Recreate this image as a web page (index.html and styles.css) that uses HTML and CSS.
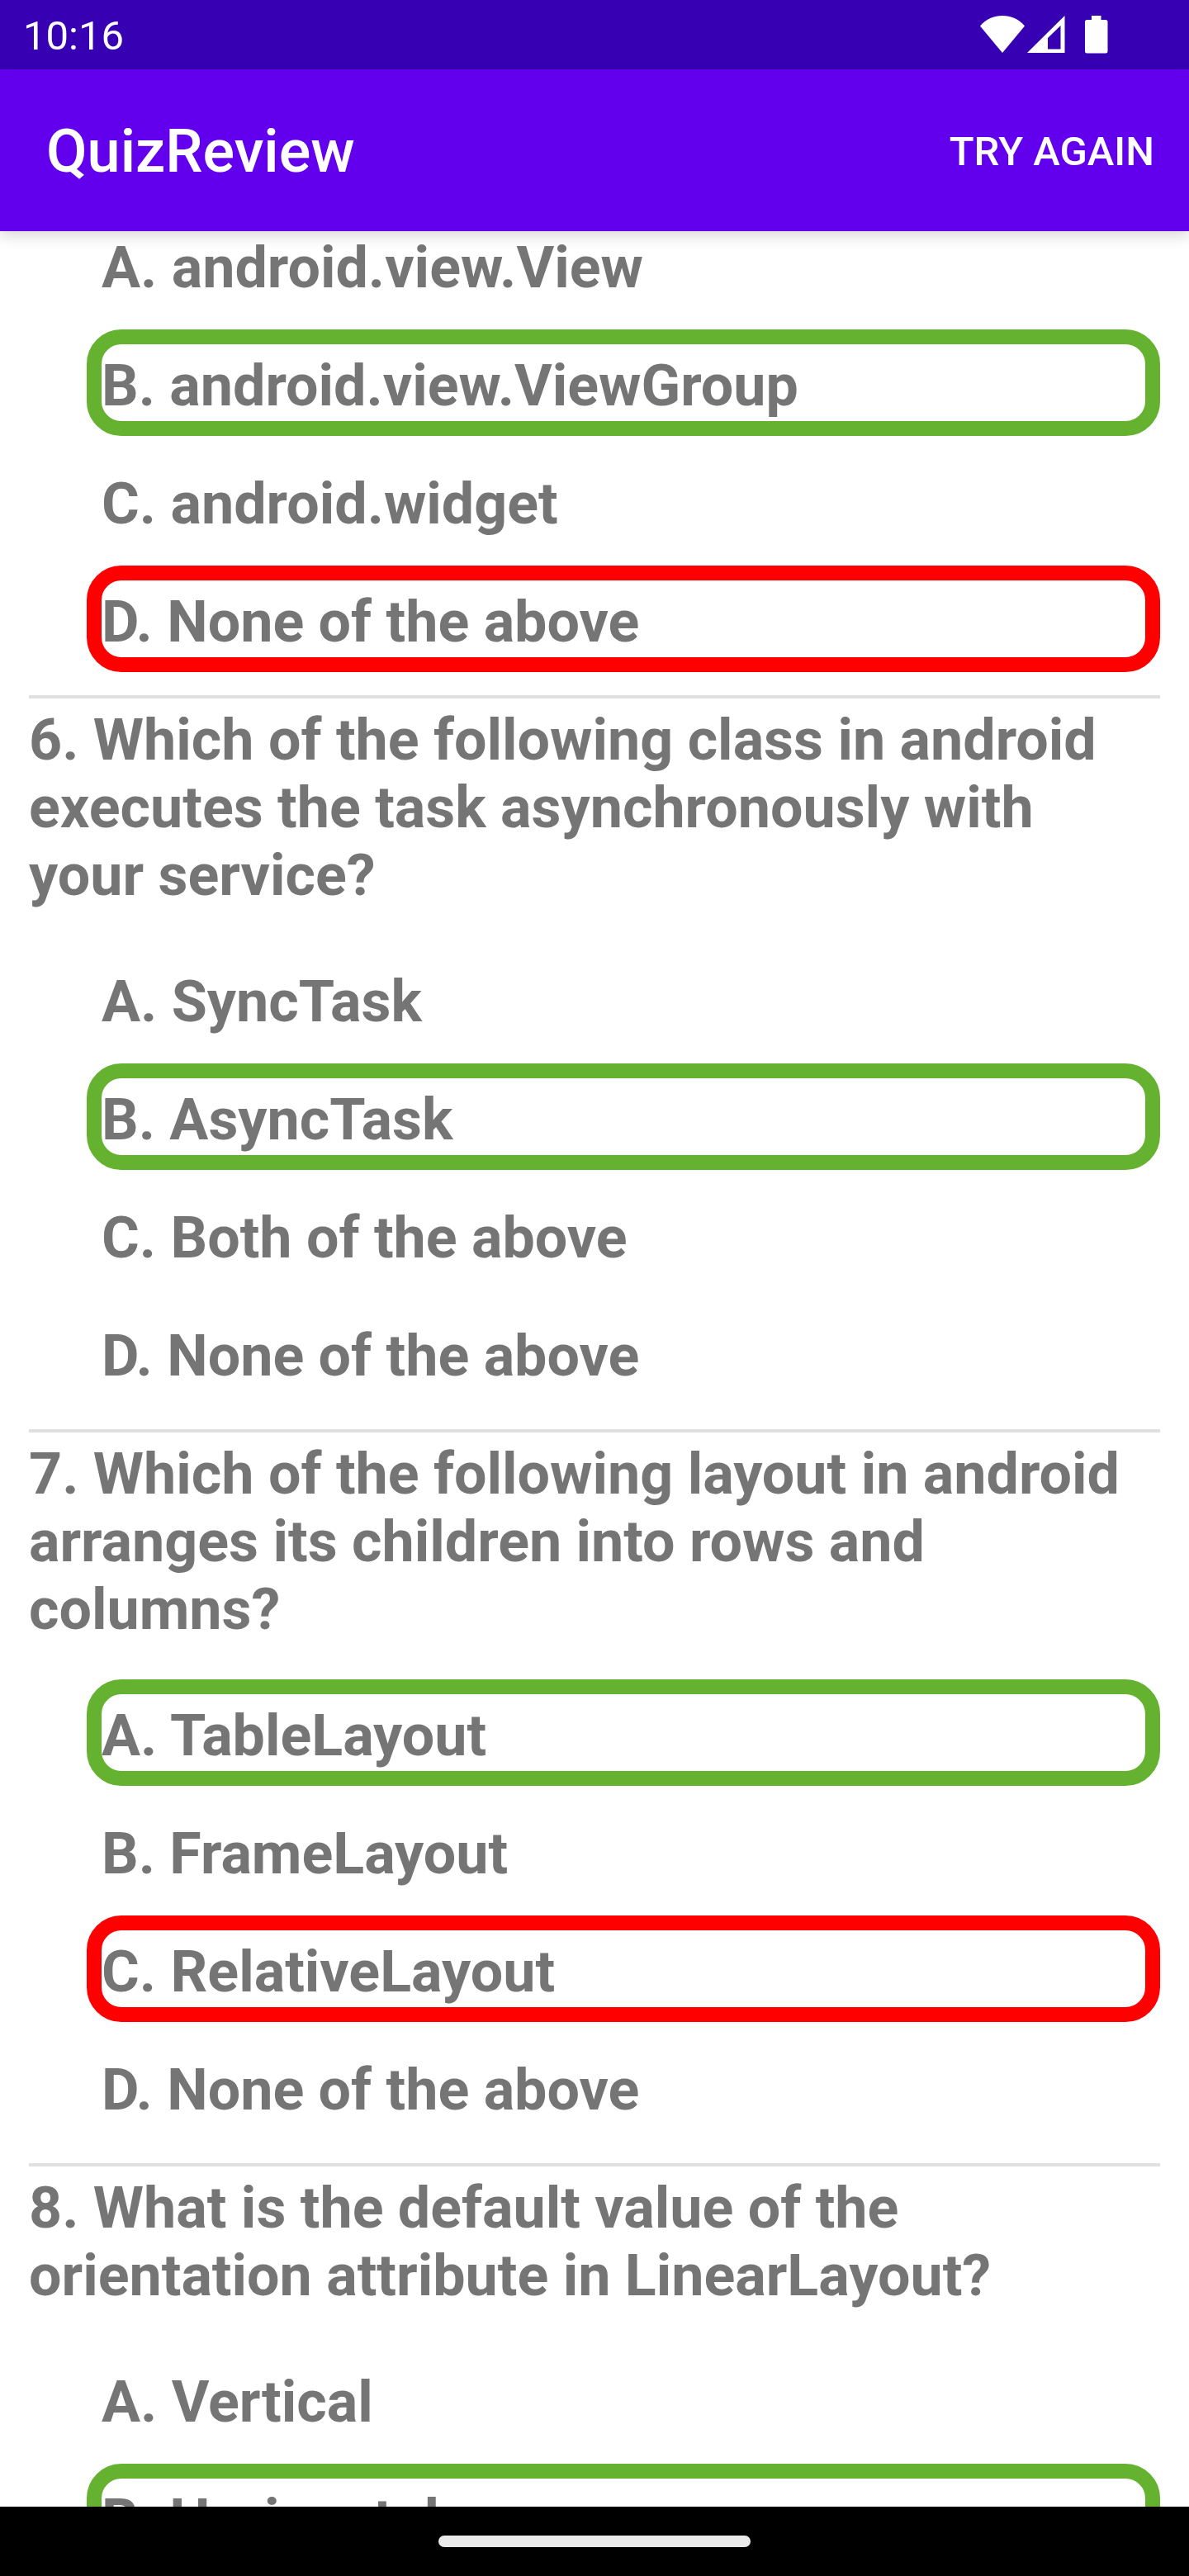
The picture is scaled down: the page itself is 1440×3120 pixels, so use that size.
FILE: index.html
```html
<!DOCTYPE html>
<html lang="en">
<head>
<meta charset="utf-8">
<meta name="viewport" content="width=device-width, initial-scale=1">
<title>QuizReview</title>
<link rel="stylesheet" href="styles.css">
</head>
<body>
<div class="status-bar">
  <span class="clock">10:16</span>
  <div class="status-icons">
    <svg class="wifi" viewBox="0 0 54 46" aria-hidden="true"><path d="M0 12.500C7 4 17 0 27 0S47 4 54 12.500L27 45Z"/></svg>
    <svg class="signal" viewBox="0 0 46 46" aria-hidden="true"><path fill-rule="evenodd" d="M0 45L45.500 0V45ZM25 27V40.500H40.500V12Z"/></svg>
    <svg class="battery" viewBox="0 0 28 46" aria-hidden="true"><path d="M8 0H19.500V5H25Q27.500 5 27.500 7.500V43Q27.500 45.500 25 45.500H2.500Q0 45.500 0 43V7.500Q0 5 2.500 5H8Z"/></svg>
  </div>
</div>
<header class="app-bar">
  <h1 class="title">QuizReview</h1>
  <button class="action" type="button">TRY AGAIN</button>
</header>
<main class="review">
  <section class="question scrolled">
    <ol class="options">
      <li class="option">A. android.view.View</li>
      <li class="option correct">B. android.view.ViewGroup</li>
      <li class="option">C. android.widget</li>
      <li class="option wrong">D. None of the above</li>
    </ol>
  </section>
  <section class="question">
    <h2 class="prompt">6. Which of the following class in android executes the task asynchronously with your service?</h2>
    <ol class="options">
      <li class="option">A. SyncTask</li>
      <li class="option correct">B. AsyncTask</li>
      <li class="option">C. Both of the above</li>
      <li class="option">D. None of the above</li>
    </ol>
  </section>
  <section class="question">
    <h2 class="prompt">7. Which of the following layout in android arranges its children into rows and columns?</h2>
    <ol class="options">
      <li class="option correct">A. TableLayout</li>
      <li class="option">B. FrameLayout</li>
      <li class="option wrong">C. RelativeLayout</li>
      <li class="option">D. None of the above</li>
    </ol>
  </section>
  <section class="question">
    <h2 class="prompt">8. What is the default value of the orientation attribute in LinearLayout?</h2>
    <ol class="options">
      <li class="option">A. Vertical</li>
      <li class="option correct">B. Horizontal</li>
    </ol>
  </section>
</main>
<footer class="nav-bar"><div class="handle"></div></footer>
</body>
</html>
```
FILE: styles.css
```css
* {
  box-sizing: border-box;
}

body {
  margin: 0;
  height: 100vh;
  display: flex;
  flex-direction: column;
  overflow: hidden;
  background: #fff;
  font-family: Roboto, sans-serif;
}

.status-bar {
  flex: none;
  height: 84px;
  padding: 0 98px 0 28px;
  display: flex;
  align-items: center;
  justify-content: space-between;
  background: #3700b3;
  color: #fff;
}

.clock {
  font-size: 49px;
  line-height: 58px;
  padding-top: 4px;
}

.status-icons {
  display: flex;
  gap: 3px;
}

.status-icons svg {
  display: block;
  height: 46px;
  fill: #fff;
}

.wifi {
  width: 54px;
}

.signal {
  width: 46px;
}

.battery {
  width: 28px;
  margin-left: 21px;
}

.app-bar {
  flex: none;
  height: 196px;
  padding: 4px 42px 0 56px;
  display: flex;
  align-items: center;
  justify-content: space-between;
  background: #6200ee;
  color: #fff;
  box-shadow: 0 6px 16px rgba(0, 0, 0, 0.15);
  z-index: 1;
}

.title {
  margin: 0;
  font-size: 72px;
  line-height: 82px;
  font-weight: 500;
}

.action {
  padding: 0;
  border: 0;
  background: none;
  color: inherit;
  font: 500 49px/58px Roboto, sans-serif;
}

.review {
  flex: 1;
  min-height: 0;
  overflow: hidden;
  padding: 0 35px;
  color: #757575;
  font-size: 70px;
  line-height: 82px;
  font-weight: 700;
}

.question + .question {
  margin-top: 28px;
  padding-top: 9px;
  border-top: 4px solid #e0e0e0;
}

/* The list is scrolled part way into its first visible question. */
.scrolled {
  margin-top: -24px;
}

.prompt {
  margin: 0 0 44px;
  font: inherit;
}

.options {
  margin: 0 0 0 70px;
  padding: 0;
  list-style: none;
  display: flex;
  flex-direction: column;
  gap: 14px;
}

.option {
  padding: 9px 0 2px;
  border: 18px solid transparent;
  border-radius: 42px;
}

.correct {
  border-color: #64b22f;
}

.wrong {
  border-color: #f00;
}

.nav-bar {
  flex: none;
  height: 84px;
  display: flex;
  align-items: center;
  justify-content: center;
  background: #000;
}

.handle {
  width: 378px;
  height: 14px;
  border-radius: 7px;
  background: #ebebeb;
}
```
